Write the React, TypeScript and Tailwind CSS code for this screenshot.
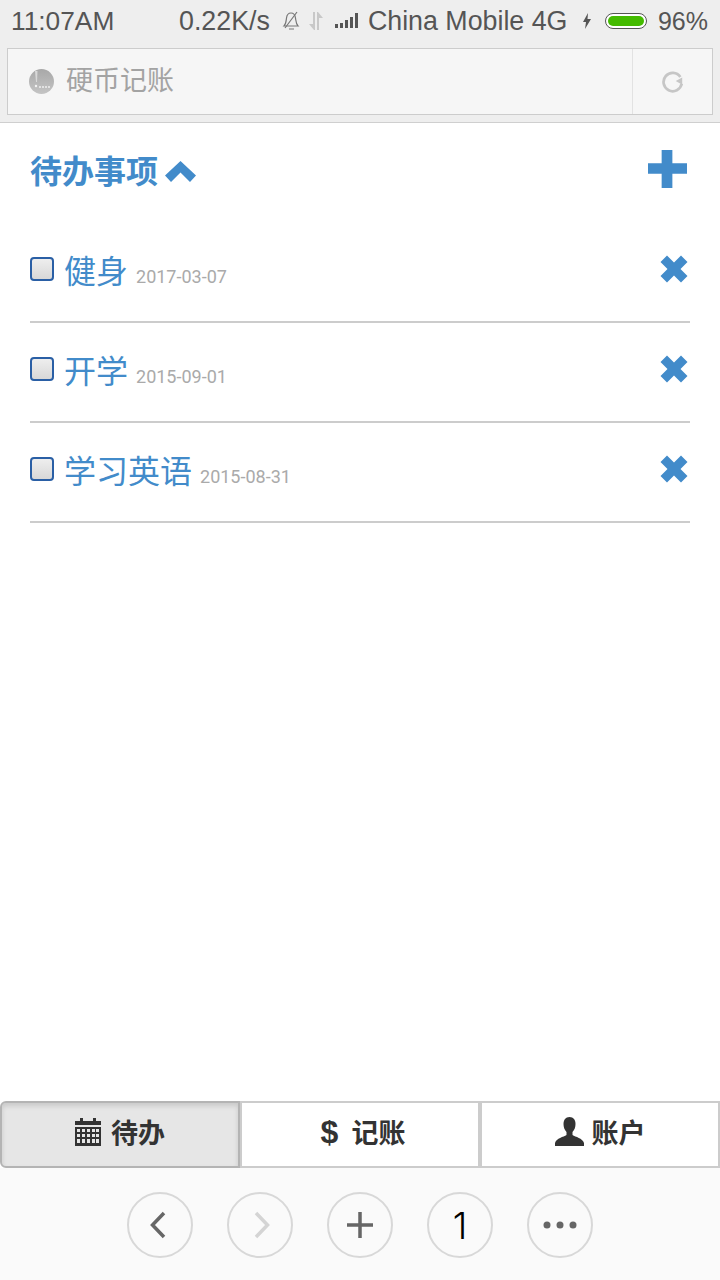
const FONT = "font-['Roboto','Noto_Sans_CJK_SC',sans-serif]";

const todos = [
  { title: "健身", date: "2017-03-07" },
  { title: "开学", date: "2015-09-01" },
  { title: "学习英语", date: "2015-08-31" },
];

function StatusBar() {
  return (
    <div className="flex h-[48px] items-center pb-[6px] pl-[11px] pr-[12px] text-[26.8px] leading-none text-[#555555] font-['Liberation_Sans',sans-serif]">
      <span className="w-[168px] text-[26.3px]">11:07AM</span>
      <span>0.22K/s</span>
      <svg width="18" height="22" viewBox="0 0 18 22" className="ml-[12px]" fill="none" stroke="#777" strokeWidth="1.2">
        <path d="M2 16c2-2 2-4 2.500-8S7 3 9 3s4 1.500 4.500 5 .5 6 2.500 8H2Z" />
        <path d="M7 19h5M15 2 3 18" />
      </svg>
      <svg width="16" height="20" viewBox="0 0 16 20" className="ml-[8px]" fill="#c8c8c8">
        <path d="M5 1h2v18H6L1 13h4zM9 1h1l5 6h-4v12H9z" />
      </svg>
      <svg width="23" height="16" viewBox="0 0 23 16" className="ml-[11px]" fill="#555">
        <rect x="0" y="11" width="3" height="4" />
        <rect x="5" y="10" width="3" height="5" />
        <rect x="10" y="7" width="3" height="8" />
        <rect x="15" y="4" width="3" height="11" />
        <rect x="20" y="0" width="3" height="15" />
      </svg>
      <span className="ml-[10px]">China Mobile 4G</span>
      <svg width="10" height="16" viewBox="0 0 10 16" className="ml-[15px]" fill="#555">
        <path d="M6 0 1 9h3l-1 7 6-10H5.500z" />
      </svg>
      <div className="ml-[13px] flex h-[16px] w-[42px] items-center rounded-full border border-[#555555] bg-white p-[2px]">
        <div className="h-full w-full rounded-full bg-[#44bb00]" />
      </div>
      <span className="ml-auto text-[25px]">96%</span>
    </div>
  );
}

function AddressBar() {
  return (
    <div className="border-b border-[#cfcfcf] bg-[#eeeeee] px-[7px] pb-[7px]">
      <div className="flex h-[67px] w-[706px] items-center border border-[#cccccc] bg-[#f6f6f6]">
        <svg width="25" height="25" viewBox="0 0 25 25" className="ml-[21px]">
          <defs>
            <linearGradient id="logo" x1="0" y1="0" x2="0" y2="1">
              <stop offset="0" stopColor="#a8a8a8" />
              <stop offset="1" stopColor="#c4c4c4" />
            </linearGradient>
          </defs>
          <circle cx="12.500" cy="12.500" r="12.500" fill="url(#logo)" />
          <path d="M6 2h2.500L8 13H7z" fill="#d8d8d8" />
          <circle cx="7" cy="17" r="1.200" fill="#f2f2f2" />
          <path d="M10 18h11" stroke="#e2e2e2" strokeWidth="2" strokeDasharray="2 1" />
        </svg>
        <span className={`ml-[12px] text-[27px] leading-none text-[#a3a3a3] ${FONT}`}>硬币记账</span>
        <div className="ml-auto flex h-full w-[80px] items-center justify-center border-l border-[#e2e2e2]">
          <svg width="22" height="22" viewBox="0 0 24 24" fill="none">
            <path d="M20 6.500A10 10 0 1 0 21.500 14" stroke="#c6c6c6" strokeWidth="3" />
            <path d="M22 7v8l-7-4z" fill="#c6c6c6" />
          </svg>
        </div>
      </div>
    </div>
  );
}

function TodoRow({ title, date }: { title: string; date: string }) {
  return (
    <div className="flex h-[100px] items-center border-b-2 border-[#cccccc]">
      <div className="mb-[6px] h-[24px] w-[24px] rounded-[4px] border-2 border-[#2a5fa5] bg-gradient-to-b from-[#eeeeee] to-[#d8d8d8]" />
      <span className={`ml-[10px] text-[32px] leading-none text-[#428bca] ${FONT}`}>{title}</span>
      <span className="ml-[8px] mt-[9px] text-[18px] leading-none text-[#aaaaaa] font-['Roboto',sans-serif]">{date}</span>
      <svg width="28" height="28" viewBox="0 0 28 28" className="mb-[6px] ml-auto mr-[2px]" fill="#428bca">
        <path d="M7 0.500 14 7.500 21 0.500 27.500 7 20.500 14 27.500 21 21 27.500 14 20.500 7 27.500 0.500 21 7.500 14 0.500 7Z" />
      </svg>
    </div>
  );
}

function Tab({ active, icon, label, gap }: { active?: boolean; icon: React.ReactNode; label: string; gap: string }) {
  return (
    <div
      className={
        active
          ? `flex h-[67px] flex-1 items-center justify-center rounded-l-[6px] border-2 border-[#b4b4b4] bg-[#e6e6e6] shadow-[inset_0_3px_5px_rgba(0,0,0,0.125)] ${gap}`
          : `flex h-[67px] flex-1 items-center justify-center border-2 border-[#cccccc] bg-white ${gap}`
      }
    >
      {icon}
      <span className={`text-[27px] leading-none font-bold text-[#333333] ${FONT}`}>{label}</span>
    </div>
  );
}

function NavButton({ children }: { children: React.ReactNode }) {
  return (
    <div className="flex h-[66px] w-[66px] items-center justify-center rounded-full border-2 border-[#d8d8d8]">
      {children}
    </div>
  );
}

export default function App() {
  return (
    <div className="flex h-[1280px] w-[720px] flex-col bg-white">
      <div className="bg-[#eeeeee]">
        <StatusBar />
      </div>
      <AddressBar />

      <div className="flex-1 px-[30px]">
        <div className="flex h-[100px] items-center justify-between">
          <div className="mb-[2px] flex items-center gap-[7px]">
            <span className={`text-[32px] leading-none font-bold text-[#428bca] ${FONT}`}>待办事项</span>
            <svg width="31" height="22" viewBox="0 0 31 22" fill="#428bca">
              <path d="M15.500 0 31 14.500 25 21 15.500 11.500 6 21 0 14.500Z" />
            </svg>
          </div>
          <svg width="39" height="38" viewBox="0 0 40 40" preserveAspectRatio="none" className="mb-[9px] mr-[3px]" fill="#428bca">
            <path d="M14 0h11v14h15v11H25v15H14V25H0V14h14z" />
          </svg>
        </div>
        {todos.map((t) => (
          <TodoRow key={t.title} title={t.title} date={t.date} />
        ))}
      </div>

      <div className="flex">
        <Tab
          active
          gap="gap-[10px]"
          label="待办"
          icon={
            <svg width="26" height="28" viewBox="0 0 26 28" className="mb-[6px]" fill="#333">
              <path d="M5 0h3v3h10V0h3v3h5v4H0V3h5zM0 9h26v19H0zm2 2v3h3v-3zm5 0v3h3v-3zm5 0v3h3v-3zm5 0v3h3v-3zm4 0v3h3v-3zM2 16v3h3v-3zm5 0v3h3v-3zm5 0v3h3v-3zm5 0v3h3v-3zm4 0v3h3v-3zM2 21v4h3v-4zm5 0v4h3v-4zm5 0v4h3v-4zm5 0v4h3v-4zm4 0v4h3v-4z" fillRule="evenodd" />
            </svg>
          }
        />
        <Tab
          gap="gap-[13px]"
          label="记账"
          icon={<span className="mb-[6px] ml-[6px] text-[32px] leading-none font-bold text-[#333333] font-['Liberation_Sans',sans-serif]">$</span>}
        />
        <Tab
          gap="gap-[8px]"
          label="账户"
          icon={
            <svg width="29" height="29" viewBox="0 0 29 29" className="mb-[6px]" fill="#333">
              <path d="M14.500 0c4 0 6 3 6 7 0 3-1 6-3 8v3c3 2 10 3 11.500 8v3H0v-3c1.500-5 8.500-6 11.500-8v-3c-2-2-3-5-3-8 0-4 2-7 6-7Z" />
            </svg>
          }
        />
      </div>

      <div className="flex h-[112px] items-center justify-center gap-[34px] bg-[#fafafa] pt-[2px]">
        <NavButton>
          <svg width="18" height="28" viewBox="0 0 18 28" className="mr-[4px]" fill="none" stroke="#666" strokeWidth="3.500">
            <path d="M15 2 3.500 14 15 26" />
          </svg>
        </NavButton>
        <NavButton>
          <svg width="18" height="28" viewBox="0 0 18 28" className="ml-[4px]" fill="none" stroke="#d4d4d4" strokeWidth="3.500">
            <path d="M3 2l11.500 12L3 26" />
          </svg>
        </NavButton>
        <NavButton>
          <svg width="28" height="28" viewBox="0 0 28 28" fill="none" stroke="#666" strokeWidth="3.500">
            <path d="M14 1v26M1 14h26" />
          </svg>
        </NavButton>
        <NavButton>
          <span className="text-[37px] leading-none text-black font-['Inter',sans-serif] font-light">1</span>
        </NavButton>
        <NavButton>
          <svg width="34" height="8" viewBox="0 0 34 8" fill="#666">
            <circle cx="4" cy="4" r="3.500" />
            <circle cx="17" cy="4" r="3.500" />
            <circle cx="30" cy="4" r="3.500" />
          </svg>
        </NavButton>
      </div>
    </div>
  );
}
